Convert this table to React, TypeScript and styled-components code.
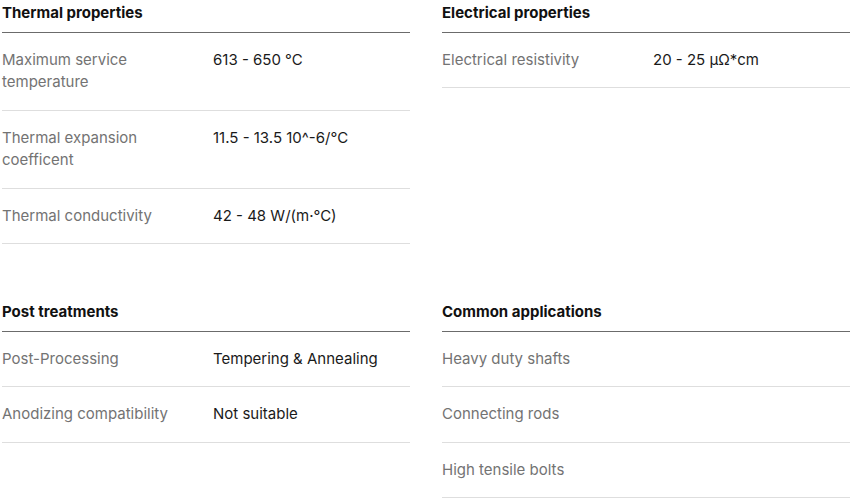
import React from "react"
import styled, { createGlobalStyle } from "styled-components"

interface Spec {
  label: string
  value?: string
}

interface SectionData {
  title: string
  rows: Spec[]
}

const GlobalStyle = createGlobalStyle`
  html, body {
    margin: 0;
    padding: 0;
    background: #fff;
  }
  body {
    font-family: Inter, "Noto Sans", "Liberation Sans", sans-serif;
    -webkit-font-smoothing: antialiased;
  }
`

const Page = styled.div`
  display: grid;
  grid-template-columns: 408px 408px;
  column-gap: 32px;
  row-gap: 57px;
  padding: 2px;
`

const Section = styled.section`
  display: flex;
  flex-direction: column;
`

const SectionTitle = styled.h3`
  margin: 0;
  padding-bottom: 7px;
  font-size: 15px;
  line-height: 22.5px;
  font-weight: 700;
  color: #111;
  border-bottom: 1.5px solid #6b6b6b;
`

const Row = styled.div`
  display: grid;
  grid-template-columns: 211px 1fr;
  padding: 16px 0;
  border-bottom: 1px solid #dedede;
  font-size: 15px;
  line-height: 22.5px;
`

const Label = styled.span`
  color: #737373;
  padding-right: 24px;
`

const Value = styled.span`
  color: #1a1a1a;
`

const sections: SectionData[] = [
  {
    title: "Thermal properties",
    rows: [
      { label: "Maximum service temperature", value: "613 - 650 °C" },
      { label: "Thermal expansion coefficent", value: "11.5 - 13.5 10^-6/°C" },
      { label: "Thermal conductivity", value: "42 - 48 W/(m·°C)" },
    ],
  },
  {
    title: "Electrical properties",
    rows: [{ label: "Electrical resistivity", value: "20 - 25 µΩ*cm" }],
  },
  {
    title: "Post treatments",
    rows: [
      { label: "Post-Processing", value: "Tempering & Annealing" },
      { label: "Anodizing compatibility", value: "Not suitable" },
    ],
  },
  {
    title: "Common applications",
    rows: [
      { label: "Heavy duty shafts" },
      { label: "Connecting rods" },
      { label: "High tensile bolts" },
    ],
  },
]

const App: React.FC = () => {
  return (
    <>
      <GlobalStyle />
      <Page>
        {sections.map((section) => (
          <Section key={section.title}>
            <SectionTitle>{section.title}</SectionTitle>
            {section.rows.map((row) => (
              <Row key={row.label}>
                <Label>{row.label}</Label>
                {row.value && <Value>{row.value}</Value>}
              </Row>
            ))}
          </Section>
        ))}
      </Page>
    </>
  )
}

export default App
